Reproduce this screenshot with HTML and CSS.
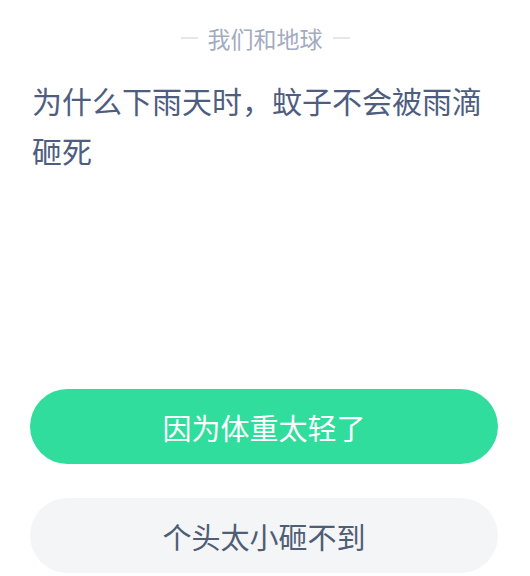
FILE: index.html
```html
<!DOCTYPE html>
<html lang="zh-CN">
<head>
  <meta charset="UTF-8" />
  <title>我们和地球</title>
  <link rel="stylesheet" href="styles.css">
</head>
<body>

<div class="quiz">
  <div class="source">
    <span class="dash"></span>
    <span class="source-name">我们和地球</span>
    <span class="dash"></span>
  </div>

  <div class="question">为什么下雨天时，蚊子不会被雨滴砸死</div>

  <div class="answers">
    <div class="answer answer-correct">因为体重太轻了</div>
    <div class="answer">个头太小砸不到</div>
  </div>
</div>

</body>
</html>
```

FILE: styles.css
```css
body {
  margin: 0;
  padding: 0;
  background: white;
  font-family: "Noto Sans CJK SC", "Noto Sans", sans-serif;
}

.quiz {
  display: flex;
  flex-direction: column;
  height: 576px;
}

.source {
  display: flex;
  align-items: center;
  justify-content: center;
  gap: 10px;
  padding-top: 23px;
  height: 30px;
}

.source-name {
  font-size: 23px;
  line-height: 30px;
  color: #a3abbf;
}

.dash {
  width: 17px;
  height: 2px;
  background: #e3e6ec;
}

.question {
  margin: 22px 32px 0 32px;
  font-size: 30px;
  line-height: 50px;
  color: #4e5d80;
}

.answers {
  display: flex;
  flex-direction: column;
  gap: 34px;
  margin: 214px 32px 0 30px;
}

.answer {
  height: 75px;
  border-radius: 38px;
  background: #f4f5f7;
  color: #4f5d75;
  font-size: 29px;
  display: flex;
  align-items: center;
  justify-content: center;
}

.answer-correct {
  background: #30dd9c;
  color: white;
}
```
